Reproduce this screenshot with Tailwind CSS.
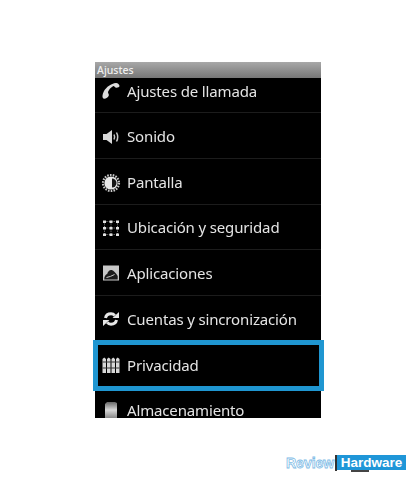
<!DOCTYPE html>
<html lang="en">
<head>
  <meta charset="UTF-8" />
  <title>Ajustes</title>
  <script src="https://cdn.jsdelivr.net/npm/@tailwindcss/browser@4"></script>
</head>
<body class="bg-white font-['Noto_Sans',sans-serif] w-[418px] h-[485px] overflow-hidden">
  <!-- Phone screen -->
  <div class="relative ml-[95px] pt-[62px] w-[226px]">
    <div class="h-[356px] overflow-hidden bg-black flex flex-col">
      <div class="h-4 shrink-0 bg-gradient-to-b from-[#a8a8a8] to-[#777777] px-[2px] text-[10.5px] font-medium leading-[16px] text-[#f0f0f0]">Ajustes</div>

      <div class="h-[35px] shrink-0 flex items-center border-b border-[#1c1c1c] pb-[8px] blur-[0.3px]">
        <svg class="w-5 h-5 ml-[6px] shrink-0" viewBox="0 0 20 20"><path d="M2.500 17.500C.8 16.500 1.500 13 3 10 5.500 6 10 2.500 15 2c1.500-.2 3.500 1.500 3.500 3 0 1.500-3 2-4 1.500S13 4.800 12 5.200C9.500 6.500 7.800 8.800 7 11c-.2 1 1.200 2.200.8 3.500-.5 1.800-3.800 3.800-5.300 3z" fill="#dddddd"/></svg>
        <span class="ml-[6px] text-[15px] tracking-[-0.15px] text-[#e4e4e4] whitespace-nowrap">Ajustes de llamada</span>
      </div>

      <div class="h-[46px] shrink-0 flex items-center border-b border-[#1c1c1c] pt-[2px] blur-[0.3px]">
        <svg class="w-5 h-5 ml-[6px] shrink-0" viewBox="0 0 20 20"><path d="M2 7h3.500L11 3v14l-5.500-4H2z" fill="#d8d8d8"/><path d="M13 7.500c.8 1.600.8 3.400 0 5M15.500 5.500c1.600 3 1.600 6 0 9" fill="none" stroke="#c8c8c8" stroke-width="1.500"/></svg>
        <span class="ml-[6px] text-[15px] tracking-[-0.15px] text-[#e4e4e4]">Sonido</span>
      </div>

      <div class="h-[46px] shrink-0 flex items-center border-b border-[#1c1c1c] pt-[2px] blur-[0.3px]">
        <svg class="w-5 h-5 ml-[6px] shrink-0" viewBox="0 0 20 20"><circle cx="10" cy="10" r="8" fill="none" stroke="#c8c8c8" stroke-width="2.200" stroke-dasharray="1.600 1.200"/><circle cx="10" cy="10" r="6.600" fill="#e8e8e8"/><path d="M11 5.500a4.500 4.500 0 0 1 0 9z" fill="#151515"/></svg>
        <span class="ml-[6px] text-[15px] tracking-[-0.15px] text-[#e4e4e4]">Pantalla</span>
      </div>

      <div class="h-[45px] shrink-0 flex items-center border-b border-[#1c1c1c] pt-[1px] blur-[0.3px]">
        <svg class="w-5 h-5 ml-[6px] shrink-0" viewBox="0 0 20 20">
          <path d="M3 3.500H17M3 10H17M3 16.500H17M3.500 3V17M10 3V17M16.500 3V17" stroke="#8a8a8a" stroke-width="0.9" stroke-dasharray="1.200 1.200" fill="none"/>
          <g fill="#e2e2e2">
            <rect x="2" y="2.500" width="3" height="2.500"/><rect x="8.500" y="2.500" width="3" height="2.500"/><rect x="15" y="2.500" width="3" height="2.500"/>
            <rect x="2" y="9" width="3" height="2.500"/><rect x="8.500" y="9" width="3" height="2.500"/><rect x="15" y="9" width="3" height="2.500"/>
            <rect x="2" y="15.500" width="3" height="2.500"/><rect x="8.500" y="15.500" width="3" height="2.500"/><rect x="15" y="15.500" width="3" height="2.500"/>
          </g>
        </svg>
        <span class="ml-[6px] text-[15px] tracking-[-0.15px] text-[#e4e4e4] whitespace-nowrap">Ubicación y seguridad</span>
      </div>

      <div class="h-[46px] shrink-0 flex items-center border-b border-[#1c1c1c] pt-[1px] blur-[0.3px]">
        <svg class="w-5 h-5 ml-[6px] shrink-0" viewBox="0 0 20 20"><rect x="2" y="2.500" width="16" height="15" fill="#c8c8c8"/><path d="M3.200 16.500c0-3.500 1.500-5 3-5.500.5-2.500 2.500-4.500 4.500-4 2 .5 4.500 3.500 6 6v3.500z" fill="#1c1c1c"/><path d="M5.500 14.500c2.500-.5 5.500-1.500 8-3" stroke="#c8c8c8" fill="none"/></svg>
        <span class="ml-[6px] text-[15px] tracking-[-0.15px] text-[#e4e4e4]">Aplicaciones</span>
      </div>

      <div class="h-[46px] shrink-0 flex items-center border-b border-[#1c1c1c] pt-[1px] blur-[0.3px]">
        <svg class="w-5 h-5 ml-[6px] shrink-0" viewBox="0 0 20 20" fill="none"><path d="M4.500 9c.5-2.500 2.700-4.200 5.500-4.200 1.800 0 3 .8 3.800 1.800M15.500 11c-.5 2.500-2.700 4.200-5.500 4.200-1.800 0-3-.8-3.800-1.800" stroke="#e6e6e6" stroke-width="3"/><path d="M11.500 9H18V3zM8.500 11H2v6z" fill="#e6e6e6"/></svg>
        <span class="ml-[6px] text-[15px] tracking-[-0.15px] text-[#e4e4e4] whitespace-nowrap">Cuentas y sincronización</span>
      </div>

      <div class="h-[45px] shrink-0 flex items-center pt-[1px] blur-[0.3px]">
        <svg class="w-5 h-5 ml-[6px] shrink-0" viewBox="0 0 20 20" fill="#d8d8d8"><path d="M1.500 4l1.700-1.500L5 4v14H1.500zM6 4l1.700-1.500L9.500 4v14H6zM10.500 4l1.700-1.500L14 4v14h-3.500zM15 4l1.700-1.500L18.500 4v14H15z"/><rect x="1.500" y="6.500" width="17" height="1" fill="#333333"/><rect x="1.500" y="12.500" width="17" height="1" fill="#333333"/></svg>
        <span class="ml-[6px] text-[15px] tracking-[-0.15px] text-[#e4e4e4]">Privacidad</span>
      </div>

      <div class="h-[46px] shrink-0 flex items-center blur-[0.3px]">
        <svg class="w-5 h-5 ml-[6px] shrink-0" viewBox="0 0 20 20"><defs><linearGradient id="sd" x1="0" y1="0" x2="0" y2="1"><stop offset="0" stop-color="#666666"/><stop offset="0.5" stop-color="#d8d8d8"/><stop offset="1" stop-color="#888888"/></linearGradient></defs><path d="M6 2h8l2 1v15H4V4z" fill="url(#sd)"/></svg>
        <span class="ml-[6px] text-[15px] tracking-[-0.15px] text-[#e4e4e4]">Almacenamiento</span>
      </div>
    </div>
    <!-- Highlight frame over the Privacidad row -->
    <div class="absolute left-[-2px] top-[340px] w-[231px] h-[51px] border-[5px] border-[#1f96d1]"></div>
  </div>

  <!-- Watermark -->
  <div class="mt-[37px] ml-[286px] flex items-start h-[18px] font-['Liberation_Sans',sans-serif]">
    <span class="text-[14px] leading-[16px] font-bold text-white [-webkit-text-stroke:0.8px_#7fbce6] w-[49px]">Review</span>
    <span class="w-[2px] h-[16px] bg-[#333333]"></span>
    <div class="relative w-[69px] h-[15px] bg-[#1f96d8] text-white text-[13.5px] font-bold leading-[15px] text-center">
      Hardware
      <span class="absolute left-[14px] top-[15px] w-[18px] h-[2px] bg-[#444444]"></span>
    </div>
  </div>
</body>
</html>
